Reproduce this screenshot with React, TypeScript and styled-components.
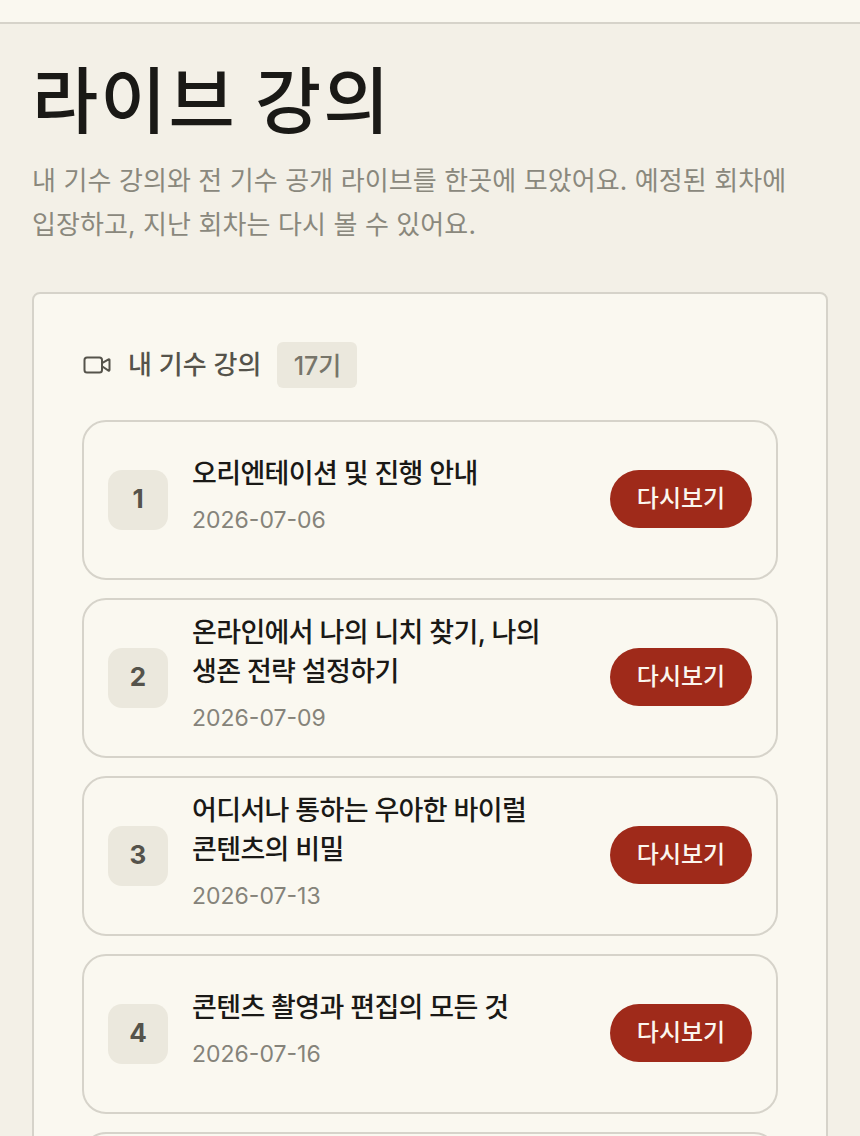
import React from 'react';
import styled, { createGlobalStyle } from 'styled-components';
import { Video } from 'lucide-react';

const colors = {
  page: '#f3f0e7',
  surface: '#faf8f0',
  border: '#d6d3ca',
  chip: '#ebe8dd',
  ink: '#1a1916',
  body: '#55534b',
  muted: '#8a887d',
  date: '#85837a',
  accent: '#9f2a1a'
};

const fontStack = `Inter, 'Noto Sans CJK KR', 'Noto Sans', sans-serif`;

const GlobalStyle = createGlobalStyle`
  html, body {
    margin: 0;
    height: 100%;
    overflow: hidden;
    background: ${colors.page};
    font-family: ${fontStack};
  }
`;

const TopBar = styled.div`
  height: 22px;
  background: ${colors.surface};
  border-bottom: 2px solid ${colors.border};
`;

const Main = styled.main`
  padding: 29px 32px 0;
`;

const Title = styled.h1`
  margin: 0;
  font-family: 'Noto Sans CJK KR', sans-serif;
  font-size: 72px;
  line-height: 86px;
  font-weight: 500;
  letter-spacing: 2px;
  color: ${colors.ink};
`;

const Lead = styled.p`
  margin: 20px 0 45px;
  font-size: 26px;
  line-height: 44px;
  letter-spacing: 0.1px;
  word-break: keep-all;
  color: ${colors.muted};
`;

const Panel = styled.section`
  border: 2px solid ${colors.border};
  border-radius: 8px;
  background: ${colors.surface};
  padding: 48px 48px 0;
`;

const SectionHeader = styled.div`
  display: flex;
  align-items: center;
  gap: 16px;
  margin-bottom: 32px;
  color: ${colors.body};
`;

const SectionName = styled.h2`
  margin: 0;
  padding-bottom: 5px;
  font-size: 26px;
  font-weight: 500;
  color: ${colors.body};
`;

const Badge = styled.span`
  box-sizing: border-box;
  display: flex;
  align-items: center;
  justify-content: center;
  width: 80px;
  height: 46px;
  padding-bottom: 3px;
  border-radius: 6px;
  background: ${colors.chip};
  font-size: 25px;
  font-weight: 500;
  color: #77756a;
`;

const List = styled.div`
  display: flex;
  flex-direction: column;
  gap: 18px;
`;

const Row = styled.article`
  box-sizing: border-box;
  height: 160px;
  display: flex;
  align-items: center;
  gap: 24px;
  padding: 0 24px;
  border: 2px solid ${colors.border};
  border-radius: 24px;
`;

const Num = styled.div`
  box-sizing: border-box;
  flex: none;
  width: 60px;
  height: 60px;
  padding-bottom: 3px;
  display: flex;
  align-items: center;
  justify-content: center;
  border-radius: 14px;
  background: ${colors.chip};
  font-size: 26px;
  font-weight: 700;
  color: ${colors.body};
`;

const Info = styled.div`
  flex: 1;
  min-width: 0;
  margin-top: -8px;
`;

const RowTitle = styled.h3`
  margin: 0 30px 9px 0;
  font-size: 27px;
  line-height: 39px;
  font-weight: 500;
  letter-spacing: -0.65px;
  color: ${colors.ink};
`;

const RowDate = styled.div`
  font-size: 23px;
  line-height: 36px;
  color: ${colors.date};
`;

const ReplayButton = styled.button`
  flex: none;
  width: 142px;
  height: 58px;
  margin-bottom: 2px;
  padding: 0 0 6px;
  border: 0;
  border-radius: 29px;
  background: ${colors.accent};
  font-family: ${fontStack};
  font-size: 24px;
  font-weight: 500;
  color: #fbf6ee;
`;

const lectures = [
  { title: '오리엔테이션 및 진행 안내', date: '2026-07-06' },
  { title: '온라인에서 나의 니치 찾기, 나의 생존 전략 설정하기', date: '2026-07-09' },
  { title: '어디서나 통하는 우아한 바이럴 콘텐츠의 비밀', date: '2026-07-13' },
  { title: '콘텐츠 촬영과 편집의 모든 것', date: '2026-07-16' }
];

export default function App() {
  return (
    <>
      <GlobalStyle />
      <TopBar />
      <Main>
        <Title>라이브 강의</Title>
        <Lead>내 기수 강의와 전 기수 공개 라이브를 한곳에 모았어요. 예정된 회차에 입장하고, 지난 회차는 다시 볼 수 있어요.</Lead>
        <Panel>
          <SectionHeader>
            <Video size={30} strokeWidth={1.6} />
            <SectionName>내 기수 강의</SectionName>
            <Badge>17기</Badge>
          </SectionHeader>
          <List>
            {lectures.map((lecture, i) => (
              <Row key={lecture.date}>
                <Num>{i + 1}</Num>
                <Info>
                  <RowTitle>{lecture.title}</RowTitle>
                  <RowDate>{lecture.date}</RowDate>
                </Info>
                <ReplayButton>다시보기</ReplayButton>
              </Row>
            ))}
            <Row />
          </List>
        </Panel>
      </Main>
    </>
  );
}
